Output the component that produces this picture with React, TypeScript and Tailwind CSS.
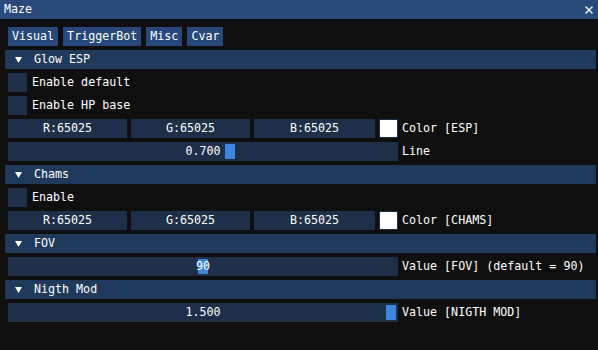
const font = { fontFamily: '"DejaVu Sans Mono", "Liberation Mono", monospace' };

function Header({ title }: { title: string }) {
  return (
    <div className="-ml-[3px] -mr-[6px] h-[19px] bg-[#1f3a5a] flex items-center">
      <svg width="7" height="6" viewBox="0 0 7 6" className="ml-[10px]">
        <polygon points="0,0 7,0 3.5,6" fill="#ffffff" />
      </svg>
      <span className="ml-[12px]">{title}</span>
    </div>
  );
}

function Check({ label }: { label: string }) {
  return (
    <div className="h-[19px] flex items-center">
      <div className="w-[19px] h-[19px] bg-[#1d2f49]" />
      <span className="ml-[5px]">{label}</span>
    </div>
  );
}

function ColorRow({ label }: { label: string }) {
  const boxes = [
    { t: "R:65025", w: "w-[119px]" },
    { t: "G:65025", w: "w-[119px]" },
    { t: "B:65025", w: "w-[121px]" },
  ];
  return (
    <div className="h-[19px] flex items-center gap-[4px]">
      {boxes.map((b) => (
        <div key={b.t} className={`${b.w} h-[19px] bg-[#1d2f49] flex items-center justify-center`}>
          {b.t}
        </div>
      ))}
      <div className="w-[19px] h-[19px] bg-white border border-[#1d2f49]" />
      <span>{label}</span>
    </div>
  );
}

function Slider({ value, grab, label }: { value: string; grab: number; label: string }) {
  return (
    <div className="h-[19px] flex items-center gap-[4px]">
      <div className="relative w-[390px] h-[19px] bg-[#1d2f49]">
        <div className="absolute top-[2px] w-[10px] h-[15px] bg-[#3d85e0]" style={{ left: grab }} />
        <div className="relative h-[19px] flex items-center justify-center">{value}</div>
      </div>
      <span>{label}</span>
    </div>
  );
}

export default function App() {
  const tabs = ["Visual", "TriggerBot", "Misc", "Cvar"];
  return (
    <div className="w-[598px] h-[350px] bg-[#0f0f0f] text-white text-[11.67px] leading-[13px] overflow-hidden" style={font}>
      <div className="h-[19px] bg-[#294a7a] flex items-center justify-between pl-[4px] pr-[5px]">
        <span>Maze</span>
        <svg width="8" height="8" viewBox="0 0 8 8">
          <path d="M0.5 0.5 L7.5 7.5 M7.5 0.5 L0.5 7.5" stroke="#ffffff" strokeWidth="1.3" />
        </svg>
      </div>
      <div className="flex flex-col gap-[4px] pl-[8px] pr-[8px] pt-[8px]">
        <div className="flex gap-[5px] h-[19px]">
          {tabs.map((t) => (
            <div key={t} className="h-[19px] px-[4px] bg-[#26487a] flex items-center">
              {t}
            </div>
          ))}
        </div>
        <Header title="Glow ESP" />
        <Check label="Enable default" />
        <Check label="Enable HP base" />
        <ColorRow label="Color [ESP]" />
        <Slider value="0.700" grab={217} label="Line" />
        <Header title="Chams" />
        <Check label="Enable" />
        <ColorRow label="Color [CHAMS]" />
        <Header title="FOV" />
        <Slider value="90" grab={190} label="Value [FOV] (default = 90)" />
        <Header title="Nigth Mod" />
        <Slider value="1.500" grab={378} label="Value [NIGTH MOD]" />
      </div>
    </div>
  );
}
